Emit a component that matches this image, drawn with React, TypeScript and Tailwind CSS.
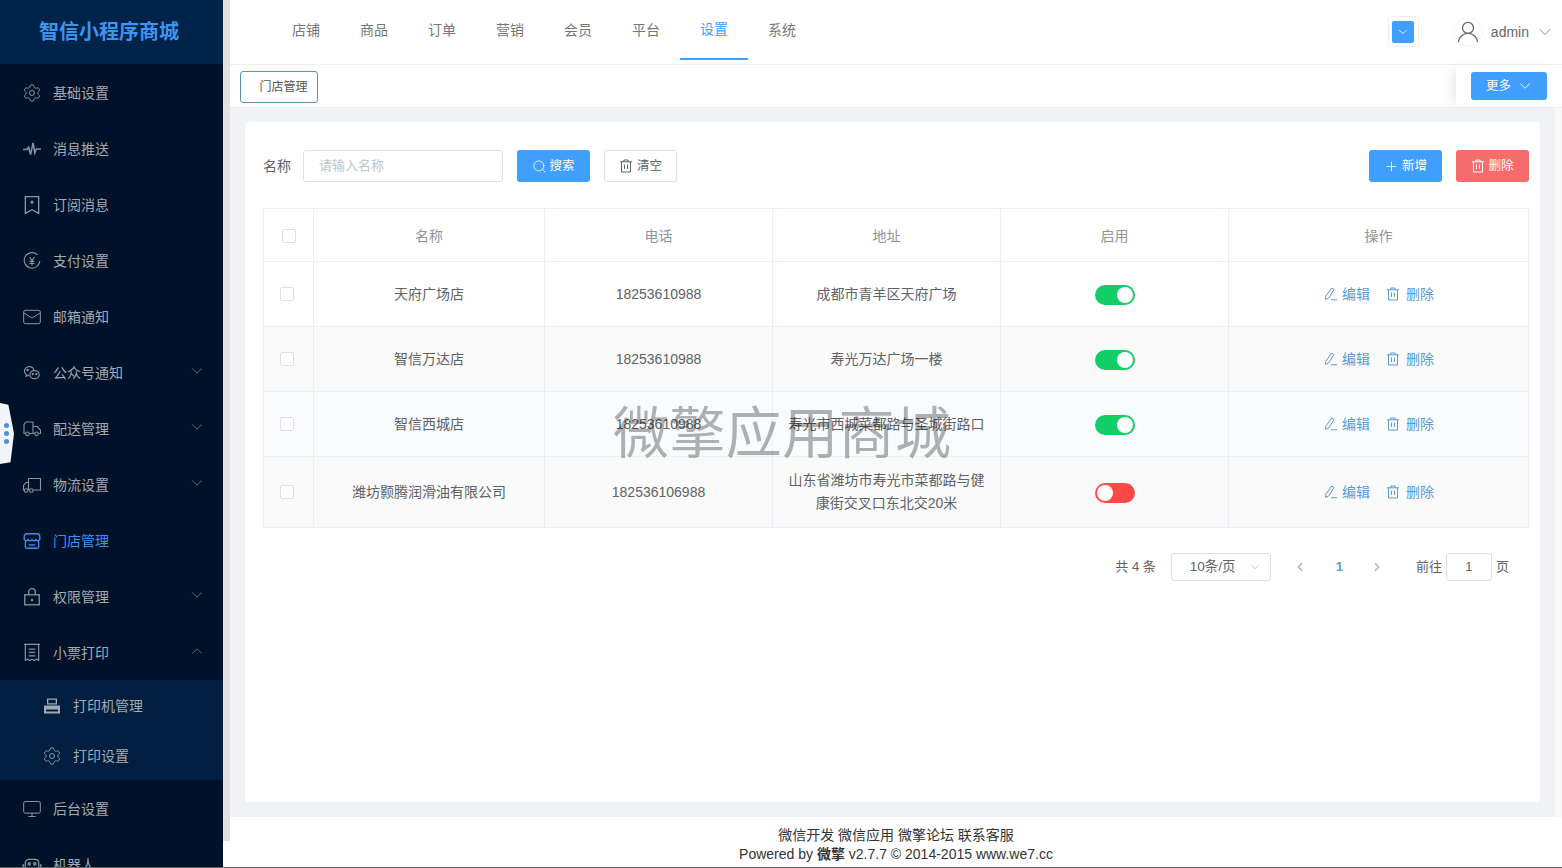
import React from 'react';
import { ChevronDown, ChevronLeft, ChevronRight, ChevronUp, Mail, Monitor, Plus, Search, Settings } from 'lucide-react';

const font = 'font-["Liberation_Sans","Noto_Sans_CJK_SC",sans-serif]';

type IconProps = { className?: string };

const PulseIcon = ({ className }: IconProps) => (
  <svg className={className} viewBox="0 0 18 18" fill="none" stroke="currentColor" strokeWidth="1.4">
    <path d="M1 9.500h3.500l1.500-2 1.700 6.500L10 3.500l1.500 9 1.500-3.500h4" />
  </svg>
);

const BookmarkIcon = ({ className }: IconProps) => (
  <svg className={className} viewBox="0 0 18 18" fill="none" stroke="currentColor" strokeWidth="1.2">
    <path d="M3 1.500h12v15L9 13.200 3 16.500z" />
    <path d="M7.500 6.500h3M9 5v3" />
  </svg>
);

const YenIcon = ({ className }: IconProps) => (
  <svg className={className} viewBox="0 0 18 18" fill="none" stroke="currentColor" strokeWidth="1">
    <path d="M14 3.500A7 7 0 1 0 16 9" />
    <path d="M6.800 5.500L9 8.500l2.200-3M9 8.500V13M6.800 9.300h4.400M6.800 11.200h4.400" />
  </svg>
);

const WechatIcon = ({ className }: IconProps) => (
  <svg className={className} viewBox="0 0 18 18" fill="none" stroke="currentColor" strokeWidth="1.1">
    <path d="M6.500 11.300c-.4 0-.8-.1-1.200-.2l-1.600.8.300-1.300c-1.100-.8-1.800-1.900-1.800-3.100 0-2.400 2-4.200 4.300-4.200 2 0 3.800 1.200 4.300 3" />
    <ellipse cx="11.300" cy="10.500" rx="4.200" ry="3.600" />
    <circle cx="5" cy="6.300" r=".6" fill="currentColor" />
    <circle cx="9.700" cy="10" r=".5" fill="currentColor" />
    <circle cx="12.900" cy="10" r=".5" fill="currentColor" />
  </svg>
);

const DeliveryIcon = ({ className }: IconProps) => (
  <svg className={className} viewBox="0 0 20 18" fill="none" stroke="currentColor" strokeWidth="1.100">
    <path d="M3.500 13.500H2V4.500L4 2h7v11.500H7.500" />
    <path d="M11 6.500h4l3.500 3.500v3.500h-2M12.500 13.500H11" />
    <circle cx="5.500" cy="13.800" r="1.800" />
    <circle cx="14.500" cy="13.800" r="1.800" />
  </svg>
);

const LogisticsIcon = ({ className }: IconProps) => (
  <svg className={className} viewBox="0 0 20 18" fill="none" stroke="currentColor" strokeWidth="1.100">
    <path d="M6.500 2.500h12v11.500h-7.500M6.500 2.500V14" />
    <path d="M6.500 6.500H4L1.500 9.500V14h1M6.500 14H6" />
    <circle cx="4.200" cy="14.500" r="1.800" />
    <circle cx="9.300" cy="14.500" r="1.800" />
  </svg>
);

const StoreIcon = ({ className }: IconProps) => (
  <svg className={className} viewBox="0 0 18 18" fill="none" stroke="currentColor" strokeWidth="1.200">
    <path d="M4.500 2.500h9a2.500 2.500 0 0 1 2.500 2.500v2.500c-1 1.700-2.600 1.700-3.500.2C11.500 9.300 10 9.300 9 7.700 8 9.300 6.500 9.300 5.500 7.700 4.600 9.200 3 9.200 2 7.500V5a2.500 2.500 0 0 1 2.500-2.500z" />
    <path d="M3 9.300V14a1.500 1.500 0 0 0 1.500 1.500h9A1.500 1.500 0 0 0 15 14V9.300" />
    <path d="M6 12.500h6" />
  </svg>
);

const LockIcon = ({ className }: IconProps) => (
  <svg className={className} viewBox="0 0 18 18" fill="none" stroke="currentColor" strokeWidth="1.200">
    <rect x="2.500" y="7" width="13" height="9" />
    <path d="M6 7V4.500a3 3 0 0 1 6 0V7" />
    <path d="M9 10.800v2" strokeWidth="1.800" />
  </svg>
);

const ReceiptIcon = ({ className }: IconProps) => (
  <svg className={className} viewBox="0 0 18 18" fill="none" stroke="currentColor" strokeWidth="1.100">
    <path d="M1.800 1.200h14.400M3 1.200v14.300l2-1 2 1.300 2-1.300 2 1.300 2-1.300 2 1V1.200" />
    <path d="M6 5.500h6M6 8.500h6M6 11.500h6" />
  </svg>
);

const PrinterIcon = ({ className }: IconProps) => (
  <svg className={className} viewBox="0 0 18 18" fill="currentColor">
    <path d="M4 1.500h10v6H4zM5.300 2.800v3.400h7.400V2.800z" fillRule="evenodd" />
    <path d="M1 8.500h16v8H1zM3 12.500v2h12v-2z" fillRule="evenodd" />
  </svg>
);

const RobotIcon = ({ className }: IconProps) => (
  <svg className={className} viewBox="0 0 18 18" fill="none" stroke="currentColor" strokeWidth="1.200">
    <rect x="3" y="4" width="12" height="10" rx="3" />
    <path d="M1 8v3M17 8v3" />
    <circle cx="6.500" cy="8" r="1" />
    <circle cx="11.500" cy="8" r="1" />
  </svg>
);

const TrashIcon = ({ className }: IconProps) => (
  <svg className={className} viewBox="0 0 14 14" fill="none" stroke="currentColor" strokeWidth="1">
    <path d="M1 2.800h12M4.800 2.800V1h4.400v1.800M2.500 2.800v10.200h9V2.800M5.500 5.500v4.500M8.500 5.500v4.500" />
  </svg>
);

const EditIcon = ({ className }: IconProps) => (
  <svg className={className} viewBox="0 0 14 14" fill="none" stroke="currentColor" strokeWidth="1">
    <path d="M7.800 1l2.200 1.500-5.400 8.600-3.100 1.400.3-3.400zM7 12.800h6" />
  </svg>
);

const UserIcon = ({ className }: IconProps) => (
  <svg className={className} viewBox="0 0 24 24" fill="none" stroke="currentColor" strokeWidth="1.400">
    <circle cx="12" cy="7.500" r="6" />
    <path d="M1.500 23c.6-5.500 5-9.500 10.500-9.500s9.900 4 10.500 9.500" />
  </svg>
);

type MenuItem = { label: string; icon: React.ComponentType<IconProps & { strokeWidth?: number }>; arrow?: 'down' | 'up'; active?: boolean };

const topMenu: MenuItem[] = [
  { label: '基础设置', icon: Settings },
  { label: '消息推送', icon: PulseIcon },
  { label: '订阅消息', icon: BookmarkIcon },
  { label: '支付设置', icon: YenIcon },
  { label: '邮箱通知', icon: Mail },
  { label: '公众号通知', icon: WechatIcon, arrow: 'down' },
  { label: '配送管理', icon: DeliveryIcon, arrow: 'down' },
  { label: '物流设置', icon: LogisticsIcon, arrow: 'down' },
  { label: '门店管理', icon: StoreIcon, active: true },
  { label: '权限管理', icon: LockIcon, arrow: 'down' },
  { label: '小票打印', icon: ReceiptIcon, arrow: 'up' },
];

const navItems = ['店铺', '商品', '订单', '营销', '会员', '平台', '设置', '系统'];

const stores = [
  { name: '天府广场店', phone: '18253610988', address: '成都市青羊区天府广场', on: true, bg: '' },
  { name: '智信万达店', phone: '18253610988', address: '寿光万达广场一楼', on: true, bg: 'bg-[#fafafa]' },
  { name: '智信西城店', phone: '18253610988', address: '寿光市西城菜都路与圣城街路口', on: true, bg: 'bg-[#f9fbfd]' },
  { name: '潍坊颢腾润滑油有限公司', phone: '182536106988', address: '山东省潍坊市寿光市菜都路与健康街交叉口东北交20米', on: false, bg: 'bg-[#fafafa]' },
];

const SideRow = ({ item }: { item: MenuItem }) => {
  const Icon = item.icon;
  return (
    <div className={`flex h-14 items-center pl-[22px] pr-[17px] text-sm ${item.active ? 'text-[#3f8ff0]' : 'text-[#a3a9b1]'}`}>
      <Icon className={`h-5 w-5 shrink-0 ${item.active ? '' : 'text-[#8a929c]'}`} strokeWidth={1.2} />
      <span className="ml-[11px] flex-1">{item.label}</span>
      {item.arrow === 'down' && <ChevronDown className="mb-1 h-[18px] w-[18px] text-[#7d8590]" strokeWidth={1} />}
      {item.arrow === 'up' && <ChevronUp className="mb-1 h-[18px] w-[18px] text-[#7d8590]" strokeWidth={1} />}
    </div>
  );
};

const Sidebar = () => (
  <div className="flex w-[230px] shrink-0 bg-white">
    <aside className="h-full w-[223px] shrink-0 overflow-hidden bg-[#001229]">
      <div className="flex h-[64px] items-center justify-center bg-[#00234a] pr-[5px] text-xl font-bold text-[#3f94f0]">智信小程序商城</div>
      <div className="h-px" />
      {topMenu.map((item) => (
        <SideRow key={item.label} item={item} />
      ))}
      <div className="-mt-[1px] bg-[#001f40] pt-px">
        <div className="flex h-[50px] items-center pl-[43px] text-sm text-[#a3a9b1]">
          <PrinterIcon className="h-[18px] w-[18px]" />
          <span className="ml-3">打印机管理</span>
        </div>
        <div className="flex h-[49px] items-center pl-[42px] text-sm text-[#a3a9b1]">
          <Settings className="h-5 w-5 text-[#8a929c]" strokeWidth={1.2} />
          <span className="ml-[11px]">打印设置</span>
        </div>
      </div>
      <div className="h-px" />
      <SideRow item={{ label: '后台设置', icon: Monitor }} />
      <SideRow item={{ label: '机器人', icon: RobotIcon }} />
    </aside>
    <div className="h-[841px] w-[7px] bg-[#e1e1e1]" />
  </div>
);

const Header = () => (
  <header className="flex h-[65px] shrink-0 items-start border-b border-[#eeeeee] bg-white pl-[42px] pr-[7px]">
    <nav className="flex h-full">
      {navItems.map((name) => (
        <div
          key={name}
          className={`flex h-[60px] w-[68px] items-center justify-center text-sm ${
            name === '设置' ? 'border-b-2 border-[#409eff] text-[#409eff]' : 'text-[#777777]'
          }`}
        >
          {name}
        </div>
      ))}
    </nav>
    <div className="ml-auto mt-4 flex items-center">
      <div className="flex h-[31px] w-[31px] items-center justify-center rounded-[3px] border border-[#eeeeee]">
        <div className="flex h-[22px] w-[22px] items-center justify-center rounded-[2px] bg-[#409eff]">
          <ChevronDown className="h-3.5 w-3.5 text-white" strokeWidth={1.5} />
        </div>
      </div>
      <div className="ml-[34px] flex h-[30px] w-[30px] items-center justify-center rounded-full border border-[#f5f5f5]">
        <UserIcon className="h-[22px] w-[22px] text-[#666666]" />
      </div>
      <span className="ml-[8px] text-sm text-[#666666]">admin</span>
      <ChevronDown className="ml-[6px] h-5 w-5 text-[#777777]" strokeWidth={1} />
    </div>
  </header>
);

const TabBar = () => (
  <div className="relative flex h-[43px] shrink-0 items-center border-b border-[#e9ecef] bg-white pl-[10px] pt-[2px]">
    <div className="flex h-8 w-[78px] items-center justify-center rounded-[3px] border border-[#5c93b8] text-xs text-[#555555]">
      <span className="ml-[9px]">门店管理</span>
    </div>
    <div className="absolute right-0 top-0 flex h-[41px] w-[106px] items-center bg-white pl-[15px] shadow-[-8px_0_10px_-4px_rgba(0,0,0,0.08)]">
      <button className="flex h-[28px] w-[76px] items-center rounded-[3px] bg-[#409eff] pl-[15px] text-[12.5px] text-white">
        <span className="mt-px">更多</span>
        <ChevronDown className="ml-[5px] h-[18px] w-[18px]" strokeWidth={1.2} />
      </button>
    </div>
  </div>
);

const Switch = ({ on }: { on: boolean }) => (
  <div className={`mx-auto flex h-5 w-10 items-center rounded-full px-0.5 ${on ? 'justify-end bg-[#13ce66]' : 'justify-start bg-[#ff4949]'}`}>
    <div className="h-4 w-4 rounded-full bg-white" />
  </div>
);

const Checkbox = ({ className = '' }: IconProps) => <div className={`h-[14px] w-[14px] rounded-[2px] border border-[#dcdfe6] bg-white ${className}`} />;

const StoreTable = () => {
  const cell = 'border border-[#ebeef5] text-center text-sm text-[#606266]';
  return (
    <table className="mt-[26px] w-[1265px] table-fixed border-collapse">
      <colgroup>
        <col className="w-[50px]" />
        <col className="w-[231px]" />
        <col className="w-[228px]" />
        <col className="w-[228px]" />
        <col className="w-[228px]" />
        <col className="w-[300px]" />
      </colgroup>
      <thead>
        <tr className="h-[53px]">
          <th className={`${cell} pt-[2px]`}>
            <Checkbox className="mx-auto" />
          </th>
          {['名称', '电话', '地址', '启用', '操作'].map((h) => (
            <th key={h} className={`${cell} pt-[2px] font-normal !text-[#909399]`}>
              {h}
            </th>
          ))}
        </tr>
      </thead>
      <tbody>
        {stores.map((s, i) => (
          <tr key={s.name} className={`${i === 3 ? 'h-[71px]' : 'h-[65px]'} ${s.bg}`}>
            <td className={cell}>
              <Checkbox className="ml-[16px]" />
            </td>
            <td className={cell}>{s.name}</td>
            <td className={cell}>{s.phone}</td>
            <td className={`${cell} px-3 leading-[23px]`}>{s.address}</td>
            <td className={`${cell} pt-px`}>
              <Switch on={s.on} />
            </td>
            <td className={cell}>
              <div className="flex items-center justify-center pl-px text-[#5b9bd5]">
                <EditIcon className="h-[14px] w-[14px]" />
                <span className="ml-[4px]">编辑</span>
                <TrashIcon className="ml-[16px] h-[14px] w-[14px]" />
                <span className="ml-[6px]">删除</span>
              </div>
            </td>
          </tr>
        ))}
      </tbody>
    </table>
  );
};

const Pagination = () => (
  <div className="mt-[25px] flex h-7 items-center justify-end pr-[20px] text-[13px] text-[#606266]">
    <span>共 4 条</span>
    <div className="ml-[15px] flex h-7 w-[100px] items-center justify-between rounded-[3px] border border-[#dcdfe6] pl-[18px] pr-[8px] text-[13.500px]">
      <span>10条/页</span>
      <ChevronDown className="h-3.5 w-3.5 text-[#c0c4cc]" strokeWidth={1.5} />
    </div>
    <ChevronLeft className="ml-[22px] h-3.5 w-3.5 text-[#a8abb2]" strokeWidth={2} />
    <span className="ml-[29px] font-bold text-[#5b9bd5]">1</span>
    <ChevronRight className="ml-[27px] h-3.5 w-3.5 text-[#a8abb2]" strokeWidth={2} />
    <span className="ml-[32px]">前往</span>
    <div className="ml-[4px] flex h-7 w-[46px] items-center justify-center rounded-[3px] border border-[#dcdfe6]">1</div>
    <span className="ml-[4px]">页</span>
  </div>
);

const Toolbar = () => (
  <div className="flex h-8 items-center text-[12.500px]">
    <span className="text-sm text-[#606266]">名称</span>
    <div className="ml-3 flex h-8 w-[200px] items-center rounded-[3px] border border-[#dcdfe6] pl-[15px] text-[13px] text-[#c0c4cc]">请输入名称</div>
    <button className="ml-[14px] flex h-8 w-[73px] items-center justify-center gap-[2px] rounded-[3px] bg-[#409eff] text-white">
      <Search className="h-[15px] w-[15px]" strokeWidth={1.3} />
      搜索
    </button>
    <button className="ml-[14px] flex h-8 w-[73px] items-center justify-center gap-[4px] rounded-[3px] border border-[#dcdfe6] text-[#606266]">
      <TrashIcon className="h-3.5 w-3.5" />
      清空
    </button>
    <button className="ml-auto flex h-8 w-[73px] items-center justify-center gap-[3px] rounded-[3px] bg-[#409eff] text-white">
      <Plus className="h-[15px] w-[15px]" strokeWidth={1.3} />
      新增
    </button>
    <button className="ml-[14px] flex h-8 w-[73px] items-center justify-center gap-[3px] rounded-[3px] bg-[#f56c6c] text-white">
      <TrashIcon className="h-3.5 w-3.5" />
      删除
    </button>
  </div>
);

export default function App() {
  return (
    <div className={`relative flex h-screen flex-col overflow-hidden ${font}`}>
      <div className="flex min-h-0 flex-1">
        <Sidebar />
        <main className="flex min-w-0 flex-1 flex-col">
          <Header />
          <TabBar />
          <div className="flex min-h-0 flex-1">
            <div className="min-w-0 flex-1 bg-[#f0f2f5] pb-[15px] pl-[15px] pr-[15px] pt-[14px]">
              <section className="h-full rounded-[4px] bg-white pb-4 pl-[18px] pr-[11px] pt-7">
                <Toolbar />
                <StoreTable />
                <Pagination />
              </section>
            </div>
            <div className="w-[7px] shrink-0 bg-[#f9f9f9]" />
          </div>
          <footer className="h-[50px] shrink-0 bg-white pt-[9px] text-center text-sm leading-[19px] text-[#333333]">
            <p>微信开发 微信应用 微擎论坛 联系客服</p>
            <p>
              Powered by <b>微擎</b> v2.7.7 © 2014-2015 www.we7.cc
            </p>
          </footer>
        </main>
      </div>
      <div className="h-px shrink-0 bg-[#6b6460]" />
      {/* floating handle on the left edge */}
      <div className="absolute left-0 top-[403px] flex h-[61px] w-[14px] flex-col items-start justify-center gap-[3px] bg-[#f2f5f9] pl-1 [clip-path:polygon(0_0,60%_3%,100%_50%,75%_97%,0_100%)]">
        <span className="h-[5px] w-[5px] rounded-full bg-[#4a8fe0]" />
        <span className="h-[5px] w-[5px] rounded-full bg-[#4a8fe0]" />
        <span className="h-[5px] w-[5px] rounded-full bg-[#4a8fe0]" />
      </div>
      {/* watermark */}
      <div className="pointer-events-none absolute left-[613px] top-[401px] whitespace-nowrap text-[56px] leading-[66px] tracking-[0.4px] text-[#000000]/30">微擎应用商城</div>
    </div>
  );
}
